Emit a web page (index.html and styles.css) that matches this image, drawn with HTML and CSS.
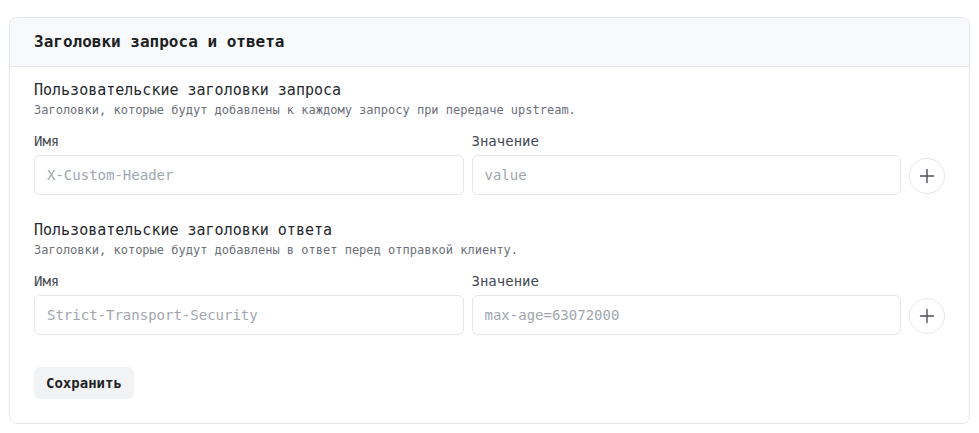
FILE: index.html
```html
<!DOCTYPE html>
<html lang="ru">
<head>
<meta charset="utf-8">
<title>Заголовки</title>
<link rel="stylesheet" href="styles.css">
</head>
<body>
<div class="card">
  <div class="card-header">
    <h2 class="card-title">Заголовки запроса и ответа</h2>
  </div>
  <div class="card-body">
    <section class="group">
      <h3 class="group-title">Пользовательские заголовки запроса</h3>
      <p class="group-desc">Заголовки, которые будут добавлены к каждому запросу при передаче upstream.</p>
      <div class="row">
        <label class="field">
          <span class="field-label">Имя</span>
          <input class="input" type="text" placeholder="X-Custom-Header">
        </label>
        <label class="field">
          <span class="field-label">Значение</span>
          <input class="input" type="text" placeholder="value">
        </label>
        <button class="add-btn" type="button" aria-label="Добавить">
          <svg width="16" height="16" viewBox="0 0 16 16" fill="none" stroke="currentColor" stroke-width="1.4" stroke-linecap="round"><path d="M8 1.5v13M1.5 8h13"/></svg>
        </button>
      </div>
    </section>
    <section class="group">
      <h3 class="group-title">Пользовательские заголовки ответа</h3>
      <p class="group-desc">Заголовки, которые будут добавлены в ответ перед отправкой клиенту.</p>
      <div class="row">
        <label class="field">
          <span class="field-label">Имя</span>
          <input class="input" type="text" placeholder="Strict-Transport-Security">
        </label>
        <label class="field">
          <span class="field-label">Значение</span>
          <input class="input" type="text" placeholder="max-age=63072000">
        </label>
        <button class="add-btn" type="button" aria-label="Добавить">
          <svg width="16" height="16" viewBox="0 0 16 16" fill="none" stroke="currentColor" stroke-width="1.4" stroke-linecap="round"><path d="M8 1.5v13M1.5 8h13"/></svg>
        </button>
      </div>
    </section>
    <div class="actions">
      <button class="save-btn" type="button">Сохранить</button>
    </div>
  </div>
</div>
</body>
</html>
```

FILE: styles.css
```css
* { box-sizing: border-box; }

html, body {
  margin: 0;
  padding: 0;
  background: #ffffff;
}

body {
  padding: 17px 9px 10px 9px;
  font-family: "DejaVu Sans Mono", "Liberation Mono", monospace;
  color: #1f2328;
}

.card {
  border: 1px solid #e4e6ea;
  border-radius: 8px;
  background: #ffffff;
  overflow: hidden;
}

.card-header {
  background: #f8f9fa;
  border-bottom: 1px solid #e4e6ea;
  padding: 12px 24px;
}

.card-title {
  margin: 0;
  font-size: 16px;
  line-height: 24px;
  font-weight: 700;
  color: #1c1f24;
}

.card-body {
  padding: 13px 24px 24px 24px;
  display: flex;
  flex-direction: column;
}

.group + .group {
  margin-top: 25px;
}

.group-title {
  margin: 0;
  font-size: 15px;
  line-height: 20px;
  font-weight: 400;
  color: #25282d;
}

.group-desc {
  margin: 2px 0 0 0;
  font-size: 12px;
  line-height: 16px;
  color: #6b7079;
}

.row {
  margin-top: 13px;
  display: flex;
  align-items: flex-end;
  gap: 8px;
}

.field {
  flex: 1 1 0;
  display: flex;
  flex-direction: column;
  gap: 4px;
  min-width: 0;
}

.field-label {
  font-size: 14px;
  line-height: 20px;
  color: #454a52;
}

.input {
  height: 40px;
  width: 100%;
  border: 1px solid #e4e6ea;
  border-radius: 6px;
  padding: 0 12px;
  font-family: inherit;
  font-size: 14px;
  color: #1f2328;
  background: #ffffff;
  outline: none;
}

.input::placeholder {
  color: #a1a6ae;
}

.add-btn {
  flex: 0 0 36px;
  width: 36px;
  height: 36px;
  border: 1px solid #e4e6ea;
  border-radius: 50%;
  background: #ffffff;
  color: #4a4f57;
  display: flex;
  align-items: center;
  justify-content: center;
  padding: 0;
  margin-bottom: 1px;
}

.actions {
  margin-top: 32px;
  display: flex;
}

.save-btn {
  height: 32px;
  padding: 0 12px;
  border: none;
  border-radius: 6px;
  background: #f2f3f5;
  font-family: inherit;
  font-size: 14px;
  font-weight: 700;
  color: #1f2328;
}
```
